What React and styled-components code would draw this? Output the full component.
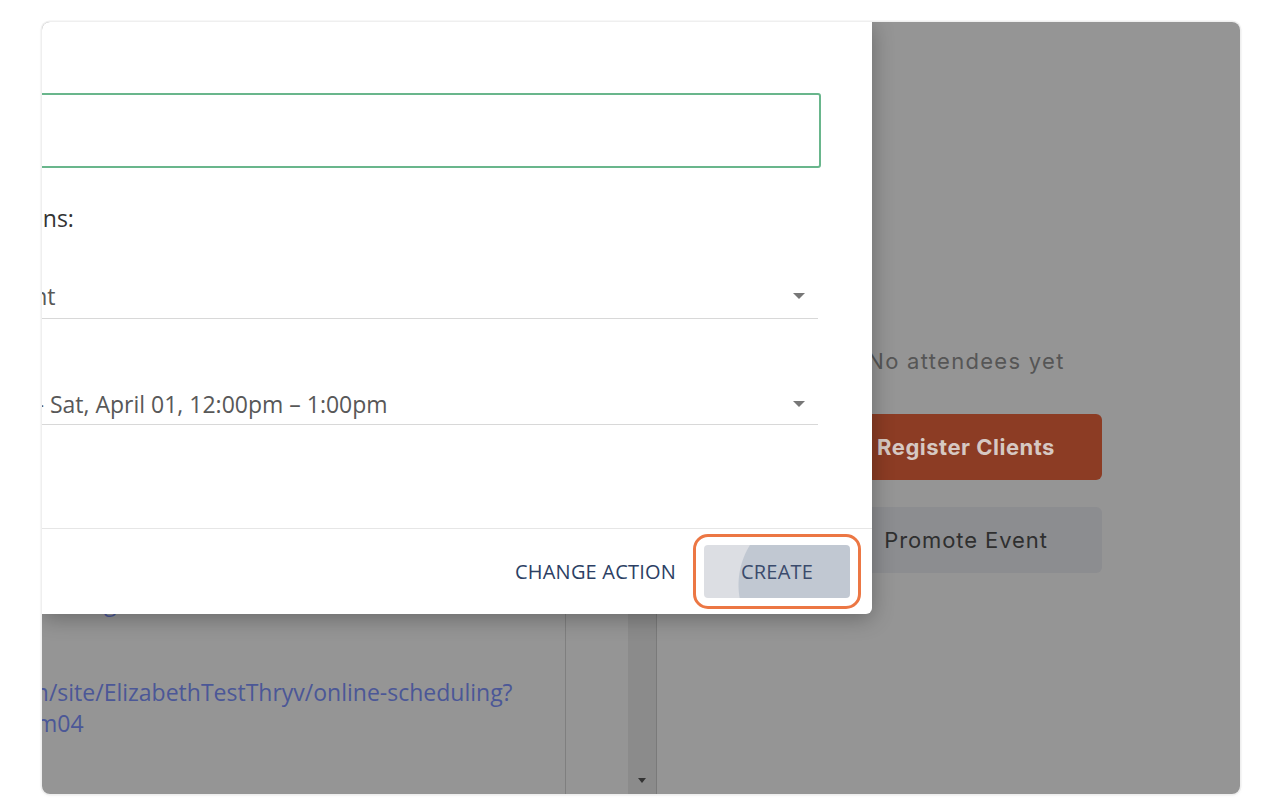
import React from "react";
import styled, { createGlobalStyle } from "styled-components";

const GlobalStyle = createGlobalStyle`
  html, body {
    margin: 0;
    background: #fff;
  }
  body {
    font-family: "Open Sans", "Liberation Sans", sans-serif;
  }
`;

const Page = styled.div`
  width: 1268px;
  height: 808px;
  box-sizing: border-box;
  padding: 22px 28px 14px 42px;
`;

const Frame = styled.div`
  position: relative;
  width: 1198px;
  height: 772px;
  border-radius: 8px;
  overflow: hidden;
  box-shadow: 0 0 0 1.5px #efefef, 0 1px 4px rgba(0, 0, 0, 0.06);
`;

/* dimmed page behind the dialog */
const Backdrop = styled.div`
  display: flex;
  height: 100%;
  background: #959595;
`;

const LinkPane = styled.div`
  width: 524px;
  box-sizing: border-box;
  border-right: 1px solid #7f7f7f;
  padding-top: 565px;
  overflow: hidden;
`;

const LinkLine = styled.div`
  font-size: 23px;
  line-height: 31px;
  color: #4b5797;
  white-space: nowrap;
  text-indent: ${(p) => p.$indent || 0}px;
  margin-top: ${(p) => p.$gap || 0}px;
`;

const MidCol = styled.div`
  width: 62px;
`;

const ScrollStrip = styled.div`
  width: 29px;
  background: #8b8b8b;
  border-right: 1px solid #7a7a7a;
  display: flex;
  flex-direction: column;
  justify-content: flex-end;
  align-items: center;
  padding-bottom: 11px;
  box-sizing: border-box;
`;

const RightPane = styled.div`
  flex: 1;
  padding: 325px 0 0 173px;
`;

const RightColumn = styled.div`
  width: 272px;
  display: flex;
  flex-direction: column;
`;

const EmptyText = styled.div`
  font-family: Inter, "Noto Sans", sans-serif;
  font-size: 22px;
  letter-spacing: 1.3px;
  line-height: 28px;
  color: #565656;
  text-align: center;
  margin-bottom: 39px;
`;

const ActionButton = styled.button`
  height: 66px;
  border: none;
  border-radius: 6px;
  font-family: Inter, "Noto Sans", sans-serif;
  font-size: 22px;
  font-weight: ${(p) => (p.$primary ? 700 : 400)};
  letter-spacing: ${(p) => (p.$primary ? 0.5 : 0.9)}px;
  background: ${(p) => (p.$primary ? "#8c3c24" : "#8c8d90")};
  color: ${(p) => (p.$primary ? "#d6c8c2" : "#2f2f2f")};
  margin-bottom: 27px;
`;

/* dialog */
const Modal = styled.div`
  position: absolute;
  top: 0;
  left: 0;
  width: 830px;
  height: 592px;
  background: #fff;
  border-bottom-right-radius: 6px;
  box-shadow: 0 4px 22px rgba(0, 0, 0, 0.3);
  display: flex;
  flex-direction: column;
  overflow: hidden;
`;

const ModalBody = styled.div`
  flex: 1;
  padding: 71px 51px 0 0;
  display: flex;
  flex-direction: column;
`;

const NameInput = styled.input`
  height: 75px;
  box-sizing: border-box;
  margin-left: -12px;
  width: calc(100% + 12px);
  border: 2px solid #69b68c;
  border-radius: 3px;
  outline: none;
  background: #fff;
`;

const Label = styled.div`
  margin-top: 34px;
  font-size: 23px;
  line-height: 32px;
  color: #333;
  white-space: nowrap;
  text-indent: ${(p) => p.$indent}px;
`;

const Select = styled.div`
  margin-top: ${(p) => p.$gap}px;
  margin-right: 3px;
  height: 45px;
  box-sizing: border-box;
  padding-top: ${(p) => p.$shift || 0}px;
  border-bottom: 1px solid #d8d8d8;
  display: flex;
  align-items: center;
  justify-content: space-between;
`;

const SelectText = styled.span`
  font-size: 23px;
  color: #585858;
  white-space: nowrap;
  text-indent: ${(p) => p.$indent}px;
  display: block;
`;

const Caret = styled.svg`
  width: ${(p) => p.$w || 12}px;
  height: ${(p) => p.$h || 6}px;
  margin-right: ${(p) => p.$mr ?? 13}px;
  flex-shrink: 0;
  fill: ${(p) => p.$color || "#777"};
`;

const Footer = styled.div`
  height: 86px;
  box-sizing: border-box;
  border-top: 1px solid #e6e6e6;
  display: flex;
  justify-content: flex-end;
  align-items: center;
  gap: 28px;
  padding-right: 22px;
`;

const TextButton = styled.button`
  background: none;
  border: none;
  padding: 0;
  font-family: "Open Sans", sans-serif;
  font-size: 20px;
  letter-spacing: 0.2px;
  color: #2c3f64;
`;

const CreateButton = styled.button`
  width: 146px;
  height: 53px;
  border: none;
  border-radius: 4px;
  background: radial-gradient(circle at 110px 40px, #c1c8d2 0 75px, #dcdee3 76px);
  font-family: "Open Sans", sans-serif;
  font-size: 20px;
  letter-spacing: 0.2px;
  color: #3a4b6c;
  outline: 3px solid #ec7744;
  outline-offset: 8px;
`;

const DownCaret = (props) => (
  <Caret viewBox="0 0 12 6" preserveAspectRatio="none" {...props}>
    <path d="M0 0h12L6 6z" />
  </Caret>
);

export default function App() {
  return (
    <>
      <GlobalStyle />
      <Page>
        <Frame>
          <Backdrop>
            <LinkPane>
              <LinkLine $indent={-4}>redesign?</LinkLine>
              <LinkLine $indent={-100} $gap={59}>
                thryv.com/site/ElizabethTestThryv/online-scheduling?
              </LinkLine>
              <LinkLine $indent={-6}>m04</LinkLine>
            </LinkPane>
            <MidCol />
            <ScrollStrip>
              <DownCaret $color="#333" $w={8} $h={5} $mr={0} />
            </ScrollStrip>
            <RightPane>
              <RightColumn>
                <EmptyText>No attendees yet</EmptyText>
                <ActionButton $primary>Register Clients</ActionButton>
                <ActionButton>Promote Event</ActionButton>
              </RightColumn>
            </RightPane>
          </Backdrop>

          <Modal>
            <ModalBody>
              <NameInput readOnly />
              <Label $indent={-59}>Options:</Label>
              <Select $gap={40}>
                <SelectText $indent={-46}>Event</SelectText>
                <DownCaret />
              </Select>
              <Select $gap={61} $shift={3}>
                <SelectText $indent={-75}>Event – Sat, April 01, 12:00pm – 1:00pm</SelectText>
                <DownCaret />
              </Select>
            </ModalBody>
            <Footer>
              <TextButton>CHANGE ACTION</TextButton>
              <CreateButton>CREATE</CreateButton>
            </Footer>
          </Modal>
        </Frame>
      </Page>
    </>
  );
}
